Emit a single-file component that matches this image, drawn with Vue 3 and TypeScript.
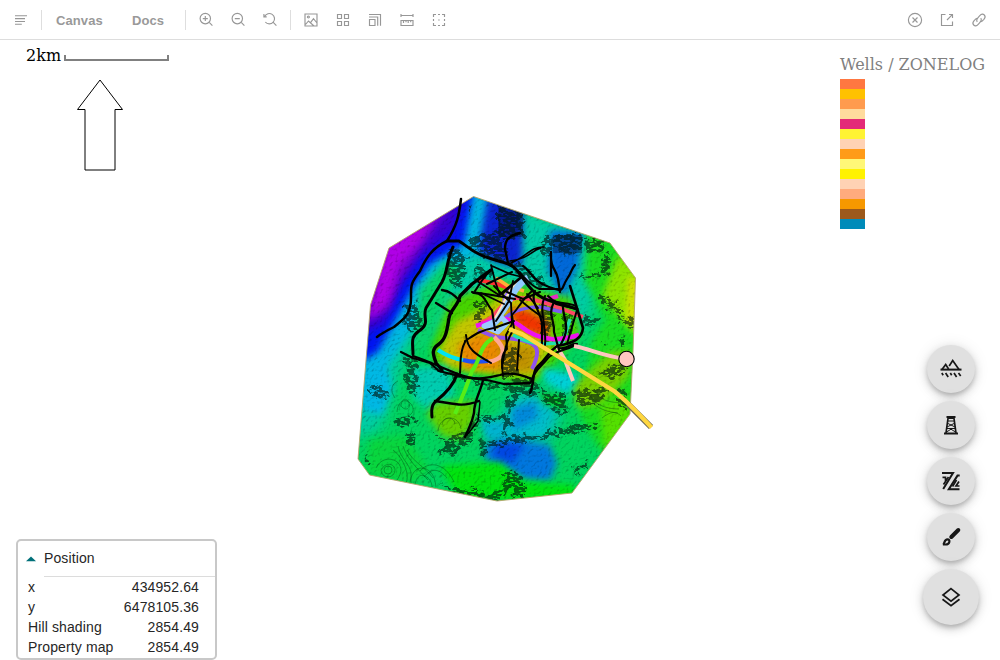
<script setup lang="ts">
interface Blob { d: string; fill: string; blur?: 'soft' | 'wide' }
interface Line { d: string; w: number; c?: string }

const outline = 'M389 248L473.5 196.5L610 243L635.5 278L633 352L630 414L572 493L497 501L369.5 475L358 459L370.5 305Z'

// Interpolated property surface, painted back to front
const surface: Blob[] = [
  { d: 'M350 190H640V510H350Z', fill: '#00d45e' },
  { d: 'M350 370L372 330L405 280L455 225L470 190L612 240L585 330L560 345L450 320L410 345L380 430L350 440Z', fill: '#00cca8', blur: 'wide' },
  { d: 'M466 190L510 190L505 245L472 256L440 276L418 320L390 362L350 400V330L400 260Z', fill: '#00b8e0', blur: 'soft' },
  { d: 'M355 355L374 348L385 360L392 388L382 415L362 410Z', fill: '#00b8e4', blur: 'soft' },
  { d: 'M350 368L378 352L390 330L413 288L430 264L464 244L474 190H350Z', fill: '#0014f0', blur: 'soft' },
  { d: 'M350 340L384 324L402 284L420 258L452 232L468 185H350Z', fill: '#3800d0', blur: 'soft' },
  { d: 'M350 328L388 310L402 276L422 246L450 205L380 190H350Z', fill: '#7c00d2', blur: 'soft' },
  { d: 'M370 320L386 240L436 210L422 238L398 266L388 300Z', fill: '#b000e6', blur: 'soft' },
  { d: 'M488 195L523 210L522 268L496 262L478 252Z', fill: '#0a22cf', blur: 'soft' },
  { d: 'M550 230L584 232L578 265L563 300L548 270Z', fill: '#0068d8', blur: 'soft' },
  { d: 'M588 230L612 240L648 275V420L600 450L580 415L592 340L606 320L584 280Z', fill: '#18dc20', blur: 'soft' },
  { d: 'M618 255L640 270L638 335L622 320L602 296Z', fill: '#8ce400', blur: 'soft' },
  { d: 'M628 276L640 280L638 332L626 322Z', fill: '#d4e000', blur: 'soft' },
  { d: 'M572 386L610 352L630 350L630 375L603 404L578 408Z', fill: '#7ad000', blur: 'soft' },
  { d: 'M600 405L625 395L635 415L605 455Z', fill: '#54e000', blur: 'soft' },
  { d: 'M419 290L446 260L462 270L450 290L427 345L414 350Z', fill: '#06d36b', blur: 'soft' },
  { d: 'M449 300L500 280L572 298L581 334L550 368L529 385L433 365L432 345Z', fill: '#46d400', blur: 'soft' },
  { d: 'M456 322L490 305L505 290L545 300L552 345L534 377L445 367L440 348Z', fill: '#c4c600', blur: 'soft' },
  { d: 'M457 346L475 335L500 330L509 344L500 371L464 368Z', fill: '#ea8a00', blur: 'soft' },
  { d: 'M507 309L525 309L550 322L547 337L520 330Z', fill: '#f03400', blur: 'soft' },
  { d: 'M500 345L537 345L532 372L500 371Z', fill: '#c09200', blur: 'soft' },
  { d: 'M410 368L447 365L455 395L431 412L413 398Z', fill: '#00ccb0', blur: 'soft' },
  { d: 'M434 402L475 401L474 421L462 440L442 436L427 415Z', fill: '#66d000', blur: 'soft' },
  { d: 'M515 395L552 390L560 412L550 440L500 452L498 425Z', fill: '#00bccc', blur: 'wide' },
  { d: 'M480 418L507 421L508 440L485 440Z', fill: '#00b3cf', blur: 'soft' },
  { d: 'M512 408L535 402L538 418L513 431Z', fill: '#0089da', blur: 'soft' },
  { d: 'M485 443L520 440L550 445L557 463L550 481L522 479L485 460Z', fill: '#0077de', blur: 'soft' },
  { d: 'M496 442L525 444L512 464L493 458Z', fill: '#0047e2', blur: 'soft' },
  { d: 'M542 368L580 375L568 395L545 382Z', fill: '#00d0d8', blur: 'soft' },
  { d: 'M535 390L562 396L565 410L546 405Z', fill: '#05d021', blur: 'soft' },
  { d: 'M440 466L500 462L525 482L575 485V500H460Z', fill: '#00e40d', blur: 'soft' },
  { d: 'M370 440L405 435L430 470L410 485L365 474Z', fill: '#08d63e', blur: 'soft' },
]

// Steep ground in hill shadow
const shadows: string[] = [
  'M497 205L523 211V237L503 241L497 233Z', 'M471 236L499 232L507 249L503 261L485 256L471 247Z',
  'M552 234H582L580 252L566 256L553 247Z', 'M584 237L606 243L599 254L585 250Z',
  'M448 249L467 255L463 285L454 290L447 272Z', 'M467 205L475 207L470 216Z',
  'M404 307L417 302L424 320L417 334L405 327Z', 'M474 302L487 300L484 325L474 321Z',
  'M405 357L417 360L416 397L407 391Z', 'M365 388L382 386L391 397L381 400L365 391Z',
  'M394 419L407 417L420 421L396 429Z', 'M407 434L417 434L415 445L408 442Z',
  'M431 431L445 440L465 433L475 418L479 420L470 442L452 456L438 454L446 446Z',
  'M475 413L490 417L508 414L507 421L483 421Z', 'M479 441L501 442L511 439L508 445L486 448L486 459L480 451Z',
  'M511 382L536 376L538 395L510 400Z', 'M538 384L551 396L563 392L569 410L562 417L546 403Z',
  'M507 398L520 395L508 415L514 421L502 437Z', 'M572 390L608 386L600 405H579Z',
  'M597 374L622 360L630 371L609 379Z', 'M500 439L553 431L575 425L599 424L599 427L560 436L520 443L500 443Z',
  'M502 470L512 472L523 477V498H513L511 482Z', 'M440 485L470 489L493 495L511 474L512 485L498 501L452 495Z',
  'M599 294L613 300L624 311L622 315L600 302Z', 'M616 317L634 318L632 327L618 323Z',
  'M622 332L626 350L620 345Z', 'M584 315L599 318L594 329L582 322Z', 'M577 275L597 271L601 277L579 279Z',
  'M605 250L610 259L608 276L601 272Z', 'M545 235L555 238L548 257L541 250Z',
  'M620 388L628 393L627 411L617 401Z', 'M600 339L609 342L604 345Z', 'M365 449L369 462L366 464Z',
  'M540 302L556 305L550 342L541 339Z', 'M565 310L576 319L570 339L562 334Z', 'M502 353L518 350L516 377H505Z',
  'M573 465L590 462L578 477Z', 'M474 266L493 274L479 285Z', 'M510 262L530 268L545 284L536 287L518 277Z',
  'M430 366L480 382L528 388L520 392L478 385L440 374Z',
]

const contours: string[] = [
  'M384 470a4 4 0 1 0 8 0a4 4 0 1 0-8 0', 'M381 470a7 7 0 1 0 14 0c0-6-9-9-14 0',
  'M376 468c5-11 18-11 23-4s-1 14-3 18', 'M393 450c6 4 13 15 14 24s-2 9-3 10', 'M398 446c2 12 12 18 13 27v13',
  'M403 446c4 13 14 22 25 34', 'M407 450c6 12 18 17 26 28', 'M410 482c2-12 9-16 16-13s9 10 10 18',
  'M415 484c2-8 6-10 10-8s7 6 7 11', 'M401 406c1-9 6-8 8-3s-3 9-8 3', 'M397 412c1-12 9-14 14-8s1 12-7 13',
  'M442 425c1-9 12-9 13-1', 'M438 431c2-17 21-17 23-2', 'M591 397c6 9 17 12 28 12', 'M595 391c5 10 15 11 26 12',
  'M594 404c7 6 15 8 24 9', 'M602 418c9-7 14-7 19-2', 'M395 398c-5-7-4-14 3-17', 'M424 477c7-9 15-9 23 1', 'M420 471c8-10 25-9 34 11',
]

const wells: Line[] = [
  { d: 'M479 280L497 284L511 289', w: 4, c: '#ff3030' }, { d: 'M496 278L508 286L524 291', w: 3.5, c: '#ffae38' },
  { d: 'M481 322C498 319 498 302 516 298C536 297 561 309 583 317', w: 4, c: '#ff4864' },
  { d: 'M499 315C510 307 497 300 511 290', w: 3, c: '#9b76ff' },
  { d: 'M505 318C518 307 538 305 549 309L562 312', w: 3.5, c: '#7d58f4' },
  { d: 'M542 301L558 296', w: 4, c: '#e32fc4' },
  { d: 'M478 330L495 337L515 339C536 342 543 347 532 369', w: 4, c: '#9052ee' },
  { d: 'M513 335C527 343 541 346 563 342L570 319', w: 3.5, c: '#20dfae' },
  { d: 'M476 326C498 319 505 315 519 325C542 344 562 340 579 335', w: 4.5, c: '#ef12ee' },
  { d: 'M528 278C514 285 510 302 501 313C497 322 493 325 485 327', w: 7, c: '#90c8ff' },
  { d: 'M517 281C507 292 503 307 491 324', w: 2, c: '#ffe4bc' },
  { d: 'M484 326L502 318L507 323L498 332Z', w: 5, c: '#9bccff' },
  { d: 'M494 337C508 350 505 359 488 362', w: 4.5, c: '#ffa894' },
  { d: 'M438 350Q450 358 463 360', w: 4, c: '#00e4f0' }, { d: 'M463 360Q473 363 488 361', w: 4, c: '#1f50f3' },
  { d: 'M493 338C478 347 481 360 472 371L465 390L455 414', w: 4, c: '#58ed16' },
  { d: 'M556 345L565 360L573 381', w: 4, c: '#ffc7bb' },
]

const faults: Line[] = [
  { d: 'M461 199C459 216 457 225 447 241C432 248 426 258 420 271C410 284 411 286 411 298C411 316 402 320 394 327C386 331 382 333 377 337', w: 2.5 },
  { d: 'M447 241H459C466 245 472 253 489 258C505 264 512 262 519 273C529 286 533 296 551 301L577 309', w: 3 },
  { d: 'M453 247C446 262 448 271 442 282L426 308C422 317 431 323 419 331C410 337 413 343 413 354', w: 3 },
  { d: 'M491 270L472 284L460 296C458 306 450 310 449 318C447 330 446 339 439 344C430 350 434 356 436 363L442 370', w: 3.4 },
  { d: 'M442 290C450 291 454 295 460 301M436 303L452 313', w: 2.4 },
  { d: 'M401 352L413 358L430 363L439 371L463 377L487 380L504 384L530 383', w: 2.3 },
  { d: 'M413 356C431 362 440 367 458 374S486 378 500 375Q512 371 532 379', w: 2.3 },
  { d: 'M457 374C453 388 440 398 435 402C430 407 432 413 432 417', w: 3 },
  { d: 'M435 401C452 403 461 408 479 401M483 380C481 391 474 400 474 413C472 424 469 427 465 437', w: 2.4 },
  { d: 'M480 402L478 421L467 435', w: 1.5 },
  { d: 'M520 233C508 236 505 240 505 249L508 263', w: 2.4 },
  { d: 'M544 247C532 246 526 257 511 263M510 261C531 258 530 251 541 248', w: 1.6 },
  { d: 'M551 252V276M551 252C550 269 556 268 558 279L560 292', w: 2.3 },
  { d: 'M523 266C531 271 532 281 549 287S560 290 567 279S570 271 575 265', w: 2.2 },
  { d: 'M509 265C522 270 525 283 539 289H560', w: 1.8 },
  { d: 'M570 286L576 305L583 328C582 338 575 343 557 346C547 353 547 359 538 366C531 373 535 383 530 393', w: 2.6 },
  { d: 'M577 344C568 350 556 350 548 358C540 368 534 371 531 382', w: 2.2 },
  { d: 'M491 265L495 281L500 295M492 266L510 274L522 277L502 294M477 281L499 295L522 276', w: 1.8 },
  { d: 'M472 292L492 295L515 299M473 293C485 292 487 306 492 310L495 330', w: 2.1 },
  { d: 'M494 286L511 303L512 324L506 335L507 349C500 355 502 365 503 376', w: 1.9 },
  { d: 'M513 281L509 301L496 321M532 291C521 301 518 309 512 315L514 329C505 342 504 356 502 368', w: 1.9 },
  { d: 'M535 291C530 303 539 307 542 323V344', w: 2.2 }, { d: 'M545 296C538 310 547 326 545 345', w: 2 },
  { d: 'M554 302C547 315 555 320 554 332L559 350M563 304C562 319 572 325 561 344', w: 2.2 },
  { d: 'M577 309L556 304L550 300M576 306C566 301 557 306 548 296M577 310L567 344', w: 2 },
  { d: 'M520 300L531 309L542 317M527 294L538 308M481 293L504 304', w: 1.8 },
  { d: 'M466 335C467 350 477 355 491 363M465 342C459 353 461 364 460 373M465 341C473 336 480 330 494 328L514 321', w: 2 },
  { d: 'M519 340L517 370M577 344C571 342 568 350 559 348', w: 2 },
  { d: 'M475 291L483 279L490 270M487 284L512 272M507 292L523 299L540 292', w: 2.1 },
]

const zones: string[] = ['#ff7741', '#ffc100', '#ff9b4e', '#ffdb9d', '#e32b78', '#fff333', '#ffd2b4', '#ff9b18', '#fff777', '#fff200', '#ffd2b4', '#ffab7d', '#f79800', '#9c591b', '#008bb9']

const readouts = [
  { label: 'x', value: '434952.64' }, { label: 'y', value: '6478105.36' },
  { label: 'Hill shading', value: '2854.49' }, { label: 'Property map', value: '2854.49' },
]

const zoomTools: string[] = [
  'M14 13.2L17.4 16.6M15.5 9.6a5.2 5.2 0 1 1-10.4 0a5.2 5.2 0 0 1 10.4 0M7.8 9.6h5M10.3 7.1v5',
  'M14 13.2L17.4 16.6M15.5 9.6a5.2 5.2 0 1 1-10.4 0a5.2 5.2 0 0 1 10.4 0M7.8 9.6h5',
  'M14 13.2L17.4 16.6M5.6 7.6A5.2 5.2 0 1 1 6.3 13M4.9 5v2.8h2.8',
]
const viewTools: string[] = [
  'M5 5h12v12H5ZM5.5 15.5L8.5 12l5.5 5M10.5 13.7L13.5 9.7L17 14M7.4 8a1 1 0 1 0 2 0a1 1 0 1 0-2 0',
  'M5.5 5.5h4v4h-4ZM12.5 5.5h4v4h-4ZM5.5 12.5h4v4h-4ZM12.5 12.5h4v4h-4Z',
  'M5.5 10.5h5.5v6h-5.5ZM5 8h8.7v8.8M5 5.5h11.5v11.3',
  'M5 6.5h12M5 5v3M17 5v3M5 11.5h12v5H5ZM7.5 12v2M10 12v1.3M12.2 12v2M14.7 12v1.3',
  'M8 5.5H5.5V8M14 5.5h2.5V8M5.5 14v2.5H8M16.5 14v2.5H14M10 5.5h2M10 16.5h2M5.5 10v2M16.5 10v2M10.2 11h1.5',
]
const pageTools: string[] = [
  'M17.6 11a6.6 6.6 0 1 1-13.2 0a6.6 6.6 0 0 1 13.2 0M8.5 8.5l5 5M13.5 8.5l-5 5',
  'M9.5 5.5H5.5v11h11V12.5M11 11L16.3 5.7M13 5.5h3.5V9',
  'M9.3 12.9c-2-2 .8-4.5 2.5-6.3s3.3-1.8 4.5-.6s1 2.8-.4 4.3l-2.6 2.6M12.7 9.1c2 2-.8 4.5-2.5 6.3s-3.3 1.8-4.5.6s-1-2.8.4-4.3l2.6-2.6',
]
</script>

<template>
  <div class="app">
    <header class="toolbar">
      <button class="tool menu" aria-label="Menu"><svg viewBox="0 0 22 22"><path d="M5 6.7h12M5 9.6h10M5 12.5h10M5 15.2h6.8" /></svg></button>
      <i class="rule" />
      <a class="tab canvas-tab">Canvas</a><a class="tab docs-tab">Docs</a>
      <i class="rule" />
      <div class="group"><button v-for="d in zoomTools" :key="d" class="tool"><svg viewBox="0 0 22 22"><path :d="d" /></svg></button></div>
      <i class="rule" />
      <div class="group"><button v-for="d in viewTools" :key="d" class="tool"><svg viewBox="0 0 22 22"><path :d="d" /></svg></button></div>
      <div class="group end"><button v-for="d in pageTools" :key="d" class="tool"><svg viewBox="0 0 22 22"><path :d="d" /></svg></button></div>
    </header>

    <main class="stage">
      <svg class="map" viewBox="0 40 1000 620">
        <defs>
          <clipPath id="area"><path :d="outline" /></clipPath>
          <filter id="soft" x="-40%" y="-40%" width="180%" height="180%" color-interpolation-filters="sRGB"><feGaussianBlur stdDeviation="3.6" /></filter>
          <filter id="wide" x="-40%" y="-40%" width="180%" height="180%" color-interpolation-filters="sRGB"><feGaussianBlur stdDeviation="7" /></filter>
          <filter id="relief" x="0" y="0" width="100%" height="100%" color-interpolation-filters="sRGB">
            <feTurbulence type="fractalNoise" baseFrequency="0.34" numOctaves="3" seed="8" result="n" />
            <feColorMatrix in="n" values="0 0 0 0 0  0 0 0 0 0  0 0 0 0 0  1 0 0 0 0" />
            <feDiffuseLighting surfaceScale="0.75" diffuseConstant="1.17" lighting-color="#fff"><feDistantLight azimuth="225" elevation="60" /></feDiffuseLighting>
          </filter>
          <filter id="hatch" filterUnits="userSpaceOnUse" x="350" y="190" width="300" height="320" color-interpolation-filters="sRGB">
            <feTurbulence type="fractalNoise" baseFrequency="0.13" numOctaves="3" seed="5" result="warp" />
            <feDisplacementMap in="SourceGraphic" in2="warp" scale="13" xChannelSelector="R" yChannelSelector="G" result="shape" />
            <feTurbulence type="fractalNoise" baseFrequency="0.2 0.4" numOctaves="2" seed="21" />
            <feColorMatrix values="0 0 0 0 0  0 0 0 0 0  0 0 0 0 0  12 0 0 0 -4.6" result="grain" />
            <feComposite in="shape" in2="grain" operator="in" />
          </filter>
        </defs>

        <g class="scale"><text x="26" y="61">2km</text><path d="M65 55V60H168V55" /></g>
        <path class="north" d="M100 80L122.5 109.5H115V170H85V109.5H77.5Z" />

        <g clip-path="url(#area)">
          <path v-for="(b, i) in surface" :key="i" :d="b.d" :fill="b.fill" :filter="b.blur ? `url(#${b.blur})` : undefined" />
          <rect class="relief" x="355" y="193" width="284" height="312" filter="url(#relief)" />
          <g class="dim"><path d="M498 205L523 213V237H498ZM553 235H582V253H553Z" /></g>
          <g class="shade" filter="url(#hatch)"><path v-for="d in shadows" :key="d" :d="d" /></g>
          <path v-for="d in contours" :key="d" class="contour" :d="d" />
        </g>
        <path class="edge" :d="outline" />

        <path v-for="(l, i) in wells" :key="'w' + i" class="well" :d="l.d" :stroke="l.c" :stroke-width="l.w" />
        <path v-for="(l, i) in faults" :key="'f' + i" class="fault" :d="l.d" :stroke-width="l.w" />

        <path class="casing" d="M628 404L651 427" stroke-width="6" />
        <path class="well" d="M509 329L522 334L546 349L614 391Q628 402 651.5 427.5" stroke="#ffd740" stroke-width="4.2" />
        <path class="well" d="M574 346C591 349 598 355 626 359" stroke="#ffc7c0" stroke-width="4" />
        <circle class="head" cx="626.5" cy="359" r="7.7" />
      </svg>

      <section class="legend">
        <h2>Wells / ZONELOG</h2>
        <div v-for="(c, i) in zones" :key="i" class="zone" :style="{ backgroundColor: c }" />
      </section>

      <section class="position">
        <header><svg viewBox="0 0 10 6"><path d="M0 5.2L5 .5L10 5.2Z" /></svg><span>Position</span></header>
        <dl><div v-for="r in readouts" :key="r.label"><dt>{{ r.label }}</dt><dd>{{ r.value }}</dd></div></dl>
      </section>

      <nav class="actions">
        <button><svg viewBox="0 0 24 24">
          <path class="line" d="M3 12.6L6.7 7.5L9.6 12M10.2 9L13.7 3.6L20 12.5" /><path class="bar" d="M1.5 12.6h21" />
          <path class="line" d="M2.8 16l1.4 2.2M6.6 16l2.6 4M11.3 16l1.4 2.2M15 16l2.6 4M19.5 16l2.2 3" />
        </svg></button>
        <button><svg viewBox="0 0 24 24"><path class="line" d="M9.2 4L7 20M14.8 4L17 20" /><path class="bar" d="M7.5 4h9M5 20.4h14" /><path class="thin" d="M8.5 8h7M8 10l8 4M16 10l-8 4M8 15.5h8M7.5 19L12 16.2L16.5 19M9 5.5h6" /></svg></button>
        <button><svg viewBox="0 0 24 24"><path class="bar" d="M3 4h11L4.2 20M20.5 20.2H9.8L18.5 6.6h2.2" /><path class="line" d="M3.5 8.3h3v3.5M9.5 8L4.5 15.5M17.5 11l-4 6.5M20 12.5L17 17h3.5" /></svg></button>
        <button><svg viewBox="0 0 24 24"><path class="brush" d="M12.3 12L19.3 5" /><path class="bristle" d="M4 19.3c1.8-.6 1-5 4.5-5c3 0 2.6 5.4-2.2 5.2Z" /></svg></button>
        <button class="large"><svg viewBox="0 0 24 24"><path class="line" d="M12 3.7L20 10L12 16.2L4 10ZM3.5 14.3L12 20.8L20.5 14.3" /></svg></button>
      </nav>
    </main>
  </div>
</template>

<style>
body { overflow: hidden; background: #fff; }
</style>

<style scoped>
.app { width: 1000px; height: 660px; font-family: "Liberation Sans", Arial, sans-serif; background: #fff; display: flex; flex-direction: column; }
button { border: 0; padding: 0; background: none; display: flex; align-items: center; justify-content: center; }
.toolbar { box-sizing: border-box; height: 40px; flex: none; border-bottom: 1px solid #ddd; display: flex; align-items: center; }
.tool { width: 32px; height: 40px; }
.tool svg { width: 22px; height: 22px; fill: none; stroke: #979797; stroke-width: 1.15; position: relative; top: .5px; }
.menu { margin-left: 5px; margin-right: 4px; }
.rule { width: 1px; height: 20px; background: #dedede; flex: none; }
.tab { color: #999; font-size: 13px; font-weight: bold; line-height: 20px; padding-top: 2px; box-sizing: border-box; letter-spacing: .1px; }
.canvas-tab { width: 76px; margin-left: 14px; }
.docs-tab { width: 53px; }
.group { display: flex; margin-left: 4px; }
.group + .rule { margin-left: 4px; }
.end { margin-left: auto; margin-right: 5px; }
.stage { position: relative; flex: 1; }
.map { display: block; width: 1000px; height: 620px; }
.scale text { font: 16px "DejaVu Serif", serif; fill: #000; }
.scale path { fill: none; stroke: #808080; stroke-width: 2; }
.north { fill: none; stroke: #000; stroke-width: 1; }
.relief { mix-blend-mode: multiply; }
.dim { fill: #001030; opacity: .4; }
.shade { fill: #001810; opacity: .62; }
.contour { fill: none; stroke: #003a10; stroke-width: .7; opacity: .55; }
.edge { fill: none; stroke: #b4a468; stroke-width: .9; }
.well, .fault, .casing { fill: none; stroke-linejoin: round; }
.fault { stroke: #000; stroke-linecap: round; }
.casing { stroke: #6b6752; }
.head { fill: #ffc7c0; stroke: #000; stroke-width: 1.1; }
.legend { position: absolute; top: 15px; left: 840px; }
.legend h2 { margin: 0 0 5px; height: 19px; font: 16px/20px "DejaVu Serif", serif; color: #808080; white-space: nowrap; }
.zone { width: 25px; height: 10px; }
.position { position: absolute; left: 16px; top: 499px; width: 201px; height: 121px; box-sizing: border-box; border: 2px solid #c8c8c8; border-radius: 5px; color: #262626; font-size: 14px; background: #fff; }
.position header { display: flex; align-items: center; height: 34px; padding-left: 8px; }
.position header svg { width: 10px; height: 6px; margin-right: 8px; fill: #007079; position: relative; top: 1px; }
.position header span { letter-spacing: .12px; }
.position dl { margin: 0; padding-top: 1px; }
.position dl::before { content: ""; display: block; margin-left: 26px; height: 1px; background: #dcdcdc; }
.position dl div { display: flex; justify-content: space-between; height: 20px; line-height: 21px; padding: 0 16px 0 10px; letter-spacing: .12px; }
.position dd { margin: 0; }
.actions { position: absolute; left: 923px; top: 305px; width: 56px; display: flex; flex-direction: column; align-items: center; gap: 8px; }
.actions button { width: 48px; height: 48px; border-radius: 50%; background: #e0e0e0; box-shadow: 0 3px 5px -1px #0003, 0 4px 10px #00000024, 0 1px 16px #0000001a; }
.actions .large { width: 56px; height: 56px; }
.actions svg { width: 24px; height: 24px; fill: none; stroke: #171717; }
.line { stroke-width: 1.7; }
.bar { stroke-width: 2; }
.thin { stroke-width: 1; }
.brush { stroke-width: 4; stroke-linecap: round; }
.bristle { stroke-width: 2.2; }
</style>
